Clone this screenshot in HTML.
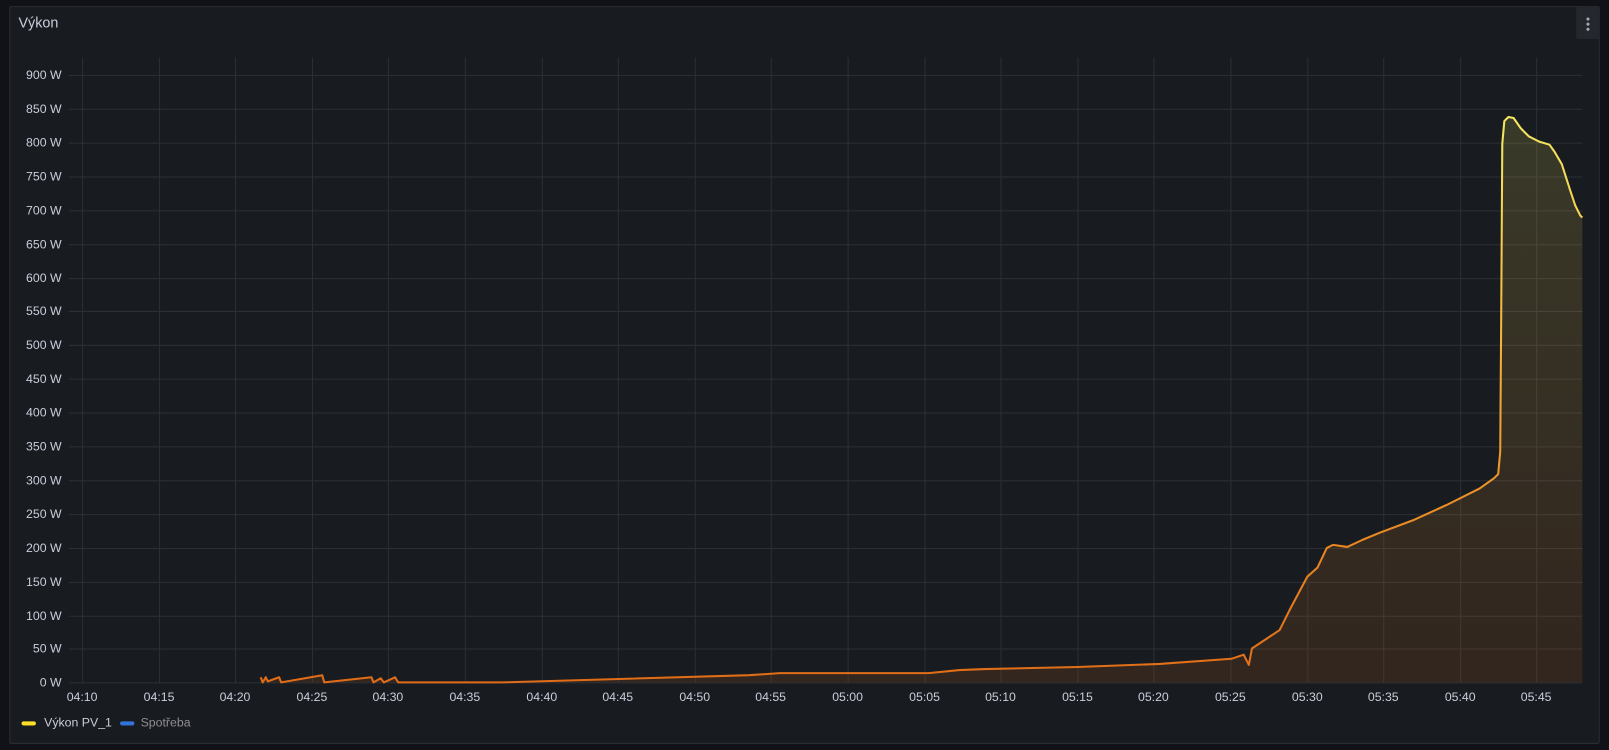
<!DOCTYPE html>
<html><head><meta charset="utf-8"><style>
html,body{margin:0;padding:0;background:#111217;width:1609px;height:750px;overflow:hidden}
#w{position:absolute;left:0;top:0;width:1568px;height:731px;transform:scale(1.02615);transform-origin:0 0;font-family:"Liberation Sans",sans-serif}
.panel{position:absolute;left:9px;top:6px;width:1550px;height:719px;background:#181b1f;border:1px solid #2a2d33;border-radius:2px;box-sizing:border-box}
.title{position:absolute;left:18px;top:14px;color:#ccccdc;font-size:14px;font-weight:500}
.menu{position:absolute;left:1536px;top:7px;width:22px;height:31px;background:#24272d;border-radius:2px}
.menu i{position:absolute;left:10px;width:3px;height:3px;border-radius:50%;background:#a8a9b0}
.leg{position:absolute;top:697px;font-size:12px;color:#ccccdc}
.sw{position:absolute;top:703px;width:14px;height:4px;border-radius:2px}
</style></head><body><div id="w">
<div class="panel"></div>
<div class="title">Výkon</div>
<div class="menu"><i style="top:10px"></i><i style="top:15px"></i><i style="top:20px"></i></div>
<svg width="1568" height="731" style="position:absolute;left:0;top:0" font-family="Liberation Sans, sans-serif" font-size="12" fill="#ccccdc">
<defs>
<linearGradient id="lg" gradientUnits="userSpaceOnUse" x1="0" y1="665" x2="0" y2="110">
<stop offset="0" stop-color="#e06c17"/><stop offset="0.5" stop-color="#f2a531"/><stop offset="1" stop-color="#f5ea62"/></linearGradient>
<linearGradient id="fg" gradientUnits="userSpaceOnUse" x1="0" y1="665" x2="0" y2="110">
<stop offset="0" stop-color="#e06c17" stop-opacity="0.13"/><stop offset="1" stop-color="#f5ea62" stop-opacity="0.15"/></linearGradient>
</defs>
<g stroke="#2c2f35" stroke-width="1">
<line x1="67" y1="73.5" x2="1542" y2="73.5"/><line x1="67" y1="106.5" x2="1542" y2="106.5"/><line x1="67" y1="139.5" x2="1542" y2="139.5"/><line x1="67" y1="172.5" x2="1542" y2="172.5"/><line x1="67" y1="205.5" x2="1542" y2="205.5"/><line x1="67" y1="238.5" x2="1542" y2="238.5"/><line x1="67" y1="271.5" x2="1542" y2="271.5"/><line x1="67" y1="303.5" x2="1542" y2="303.5"/><line x1="67" y1="336.5" x2="1542" y2="336.5"/><line x1="67" y1="369.5" x2="1542" y2="369.5"/><line x1="67" y1="402.5" x2="1542" y2="402.5"/><line x1="67" y1="435.5" x2="1542" y2="435.5"/><line x1="67" y1="468.5" x2="1542" y2="468.5"/><line x1="67" y1="501.5" x2="1542" y2="501.5"/><line x1="67" y1="534.5" x2="1542" y2="534.5"/><line x1="67" y1="567.5" x2="1542" y2="567.5"/><line x1="67" y1="600.5" x2="1542" y2="600.5"/><line x1="67" y1="632.5" x2="1542" y2="632.5"/><line x1="67" y1="665.5" x2="1542" y2="665.5"/>
<line x1="80.5" y1="56" x2="80.5" y2="666"/><line x1="155.5" y1="56" x2="155.5" y2="666"/><line x1="229.5" y1="56" x2="229.5" y2="666"/><line x1="304.5" y1="56" x2="304.5" y2="666"/><line x1="378.5" y1="56" x2="378.5" y2="666"/><line x1="453.5" y1="56" x2="453.5" y2="666"/><line x1="528.5" y1="56" x2="528.5" y2="666"/><line x1="602.5" y1="56" x2="602.5" y2="666"/><line x1="677.5" y1="56" x2="677.5" y2="666"/><line x1="751.5" y1="56" x2="751.5" y2="666"/><line x1="826.5" y1="56" x2="826.5" y2="666"/><line x1="901.5" y1="56" x2="901.5" y2="666"/><line x1="975.5" y1="56" x2="975.5" y2="666"/><line x1="1050.5" y1="56" x2="1050.5" y2="666"/><line x1="1124.5" y1="56" x2="1124.5" y2="666"/><line x1="1199.5" y1="56" x2="1199.5" y2="666"/><line x1="1274.5" y1="56" x2="1274.5" y2="666"/><line x1="1348.5" y1="56" x2="1348.5" y2="666"/><line x1="1423.5" y1="56" x2="1423.5" y2="666"/><line x1="1497.5" y1="56" x2="1497.5" y2="666"/>
</g>
<g text-anchor="end">
<text x="60" y="77">900 W</text><text x="60" y="110">850 W</text><text x="60" y="143">800 W</text><text x="60" y="176">750 W</text><text x="60" y="209">700 W</text><text x="60" y="242">650 W</text><text x="60" y="275">600 W</text><text x="60" y="307">550 W</text><text x="60" y="340">500 W</text><text x="60" y="373">450 W</text><text x="60" y="406">400 W</text><text x="60" y="439">350 W</text><text x="60" y="472">300 W</text><text x="60" y="505">250 W</text><text x="60" y="538">200 W</text><text x="60" y="571">150 W</text><text x="60" y="604">100 W</text><text x="60" y="636">50 W</text><text x="60" y="669">0 W</text>
</g>
<g text-anchor="middle">
<text x="80" y="683">04:10</text><text x="155" y="683">04:15</text><text x="229" y="683">04:20</text><text x="304" y="683">04:25</text><text x="378" y="683">04:30</text><text x="453" y="683">04:35</text><text x="528" y="683">04:40</text><text x="602" y="683">04:45</text><text x="677" y="683">04:50</text><text x="751" y="683">04:55</text><text x="826" y="683">05:00</text><text x="901" y="683">05:05</text><text x="975" y="683">05:10</text><text x="1050" y="683">05:15</text><text x="1124" y="683">05:20</text><text x="1199" y="683">05:25</text><text x="1274" y="683">05:30</text><text x="1348" y="683">05:35</text><text x="1423" y="683">05:40</text><text x="1497" y="683">05:45</text>
</g>
<path fill="url(#fg)" d="M254,660 L256,665 L259,660 L261,664 L272,660 L274,665 L314,658 L316,665 L362,660 L364,665 L371,661 L374,665 L385,660 L388,665 L490,665 L730,658 L760,656 L905,656 L935,653 L960,652 L1050,650 L1130,647 L1200,642 L1212,638 L1217,648 L1220,632 L1235,622 L1247,614 L1257,594 L1274,562 L1284,553 L1293,534 L1299,531 L1313,533 L1328,526 L1345,519 L1377,507 L1410,492 L1442,476 L1456,466 L1460,462 L1462,440 L1463,300 L1464,140 L1466,118 L1470,114 L1475,115 L1482,125 L1490,133 L1500,138 L1510,141 L1515,148 L1522,160 L1530,185 L1535,200 L1540,210 L1542,212 L1542,665 L254,665 Z"/>
<path fill="none" stroke="url(#lg)" stroke-width="2" stroke-linejoin="round" d="M254,660 L256,665 L259,660 L261,664 L272,660 L274,665 L314,658 L316,665 L362,660 L364,665 L371,661 L374,665 L385,660 L388,665 L490,665 L730,658 L760,656 L905,656 L935,653 L960,652 L1050,650 L1130,647 L1200,642 L1212,638 L1217,648 L1220,632 L1235,622 L1247,614 L1257,594 L1274,562 L1284,553 L1293,534 L1299,531 L1313,533 L1328,526 L1345,519 L1377,507 L1410,492 L1442,476 L1456,466 L1460,462 L1462,440 L1463,300 L1464,140 L1466,118 L1470,114 L1475,115 L1482,125 L1490,133 L1500,138 L1510,141 L1515,148 L1522,160 L1530,185 L1535,200 L1540,210 L1542,212"/>
</svg>
<div class="sw" style="left:21px;background:#fade2a"></div>
<div class="leg" style="left:43px">Výkon PV_1</div>
<div class="sw" style="left:117px;background:#3274d9"></div>
<div class="leg" style="left:137px;color:#8e8e95">Spotřeba</div>
</div></body></html>
